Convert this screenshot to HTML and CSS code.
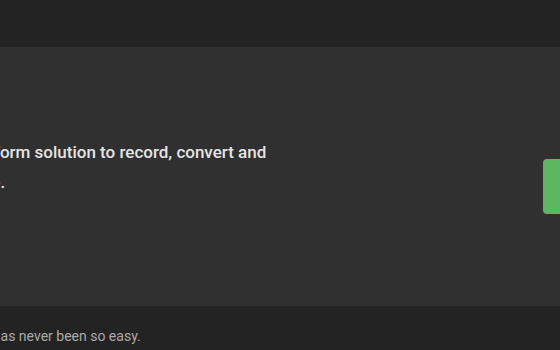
FILE: index.html
```html
<!DOCTYPE html>
<html lang="en">
  <head>
    <meta charset="UTF-8" />
    <meta name="viewport" content="width=device-width, initial-scale=1.0" />
    <title>FFmpeg</title>
    <link rel="stylesheet" href="styles.css">
  </head>
  <body>
    <header class="navbar"></header>
    <section class="hero">
      <div class="hero__inner">
        <p class="hero__text">
          A complete, cross-platform solution to record, convert and<br />
          stream audio and video.
        </p>
        <a class="btn-download" href="#">Download</a>
      </div>
    </section>
    <section class="intro">
      <p class="intro__text">Converting video and audio has never been so easy.</p>
    </section>
  </body>
</html>
```

FILE: styles.css
```css
* {
  margin: 0;
  padding: 0;
  box-sizing: border-box;
}

body {
  font-family: Roboto, 'Liberation Sans', sans-serif;
  background-color: #232323;
  color: #ddd;
  overflow: hidden;
}

.navbar {
  height: 47px;
  background-color: #232323;
}

.hero {
  height: 259px;
  background-color: #303030;
  padding-top: 90px;
}

.hero__inner {
  display: flex;
  align-items: flex-start;
  margin-left: -177px;
  margin-right: -130px;
}

.hero__text {
  flex: 1;
  font-size: 17px;
  font-weight: 500;
  line-height: 30px;
  color: #e4e4e4;
}

.btn-download {
  flex: none;
  margin-top: 22px;
  width: 147px;
  height: 55px;
  padding: 0 16px;
  border-radius: 4px;
  background-color: #5cb85c;
  color: #fff;
  font-size: 18px;
  line-height: 55px;
  text-decoration: none;
}

.intro {
  padding-top: 20px;
}

.intro__text {
  margin-left: -180px;
  font-size: 14px;
  line-height: 20px;
  color: #aaa;
}
```
